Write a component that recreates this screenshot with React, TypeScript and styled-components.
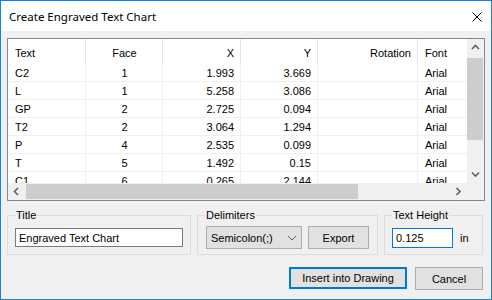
import styled, { createGlobalStyle } from "styled-components";

const GlobalStyle = createGlobalStyle`
  html, body {
    margin: 0;
    padding: 0;
    background: #ffffff;
  }
  body {
    font-family: "Liberation Sans", Arial, sans-serif;
    font-size: 11px;
    color: #000000;
  }
`;

type Align = "left" | "center" | "right";

interface Column {
  key: string;
  label: string;
  width: number;
  align: Align;
}

const columns: Column[] = [
  { key: "text", label: "Text", width: 78, align: "left" },
  { key: "face", label: "Face", width: 77, align: "center" },
  { key: "x", label: "X", width: 78, align: "right" },
  { key: "y", label: "Y", width: 77, align: "right" },
  { key: "rotation", label: "Rotation", width: 100, align: "right" },
  { key: "font", label: "Font", width: 80, align: "left" },
];

const rows: Record<string, string>[] = [
  { text: "C2", face: "1", x: "1.993", y: "3.669", rotation: "", font: "Arial" },
  { text: "L", face: "1", x: "5.258", y: "3.086", rotation: "", font: "Arial" },
  { text: "GP", face: "2", x: "2.725", y: "0.094", rotation: "", font: "Arial" },
  { text: "T2", face: "2", x: "3.064", y: "1.294", rotation: "", font: "Arial" },
  { text: "P", face: "4", x: "2.535", y: "0.099", rotation: "", font: "Arial" },
  { text: "T", face: "5", x: "1.492", y: "0.15", rotation: "", font: "Arial" },
  { text: "C1", face: "6", x: "0.265", y: "2.144", rotation: "", font: "Arial" },
];

const gridTemplate = columns.map((c) => `${c.width}px`).join(" ");

const justify = (a: Align) =>
  a === "left" ? "flex-start" : a === "right" ? "flex-end" : "center";

const Window = styled.div`
  box-sizing: border-box;
  width: 492px;
  height: 300px;
  border: 1px solid #1883d7;
  display: flex;
  flex-direction: column;
  background: #f0f0f0;
`;

const TitleBar = styled.div`
  height: 30px;
  flex: none;
  background: #ffffff;
  display: flex;
  align-items: center;
  justify-content: space-between;
  padding: 0 9px 0 8px;
`;

const TitleText = styled.span`
  font-family: "Noto Sans", "Open Sans", sans-serif;
  font-size: 11.5px;
  padding-top: 1px;
`;

const CloseIcon = styled.svg`
  width: 10px;
  height: 10px;
  margin-top: 1px;
`;

const Body = styled.div`
  flex: 1;
  display: flex;
  flex-direction: column;
  padding: 7px 7px 10px 6px;
`;

const ListBox = styled.div`
  height: 163px;
  box-sizing: border-box;
  margin-right: -1px;
  border: 1px solid #828790;
  background: #ffffff;
  display: grid;
  grid-template-columns: 1fr 17px;
  grid-template-rows: 144px 17px;
  overflow: hidden;
`;

const Viewport = styled.div`
  overflow: hidden;
`;

const HeaderRow = styled.div`
  display: grid;
  grid-template-columns: ${gridTemplate};
  height: 25px;
`;

const HeaderCell = styled.div<{ $align: Align }>`
  display: flex;
  align-items: center;
  justify-content: ${({ $align }) => justify($align)};
  padding: 2px 6px 0 7px;
  border-right: 1px solid #e5e5e5;
  white-space: nowrap;
`;

const DataRow = styled.div`
  display: grid;
  grid-template-columns: ${gridTemplate};
  height: 18px;
`;

const Cell = styled.div<{ $align: Align }>`
  box-sizing: border-box;
  display: flex;
  align-items: center;
  justify-content: ${({ $align }) => justify($align)};
  padding: 0 6px 0 7px;
  border-right: 1px solid #f0f0f0;
  border-bottom: 1px solid #f0f0f0;
  white-space: nowrap;
`;

const VScroll = styled.div`
  background: #f0f0f0;
  display: flex;
  flex-direction: column;
`;

const HScroll = styled.div`
  background: #f0f0f0;
  display: flex;
  align-items: stretch;
`;

const Corner = styled.div`
  background: #f0f0f0;
`;

const ArrowButton = styled.div`
  flex: none;
  width: 17px;
  height: 17px;
  display: flex;
  align-items: center;
  justify-content: center;
`;

const Track = styled.div<{ $vertical?: boolean }>`
  flex: 1;
  display: flex;
  flex-direction: ${({ $vertical }) => ($vertical ? "column" : "row")};
  padding: ${({ $vertical }) => ($vertical ? "2px 1px 0 0" : "1px 0 1px 1px")};
`;

const Thumb = styled.div<{ $size: number; $vertical?: boolean }>`
  background: #cdcdcd;
  ${({ $vertical, $size }) =>
    $vertical ? `height: ${$size}px; width: 100%;` : `width: ${$size}px; height: 100%;`}
`;

const GroupRow = styled.div`
  display: flex;
  gap: 6px;
  margin-top: 8px;
  padding-right: 1px;
`;

const Group = styled.fieldset<{ $width: number }>`
  box-sizing: border-box;
  width: ${({ $width }) => $width}px;
  height: 46px;
  margin: 0;
  padding: 0 7px 1px 7px;
  border: 1px solid #dcdcdc;
  display: flex;
  align-items: center;
  gap: 6px;
  min-width: 0;
`;

const Legend = styled.legend`
  padding: 0 1px;
  font-size: 11px;
  line-height: 13px;
`;

const TextBox = styled.input<{ $width: number; $focused?: boolean }>`
  box-sizing: border-box;
  width: ${({ $width }) => $width}px;
  height: ${({ $focused }) => ($focused ? 20 : 19)}px;
  margin: 0;
  padding: 0 3px;
  border: 1px solid ${({ $focused }) => ($focused ? "#0078d7" : "#7a7a7a")};
  background: #ffffff;
  font-family: "Liberation Sans", Arial, sans-serif;
  font-size: 11px;
  color: #000000;
  outline: none;
`;

const Dropdown = styled.div`
  box-sizing: border-box;
  width: 96px;
  height: 23px;
  margin-left: 1px;
  border: 1px solid #adadad;
  background: #e1e1e1;
  display: flex;
  align-items: center;
  justify-content: space-between;
  padding: 0 4px 0 4px;
`;

const Button = styled.div<{ $width: number; $default?: boolean }>`
  box-sizing: border-box;
  width: ${({ $width }) => $width}px;
  height: ${({ $default }) => ($default ? 22 : 23)}px;
  border: ${({ $default }) => ($default ? "2px solid #0078d7" : "1px solid #adadad")};
  background: #e1e1e1;
  display: flex;
  align-items: center;
  justify-content: center;
  white-space: nowrap;
`;

const Unit = styled.span`
  margin-left: 1px;
`;

const ButtonRow = styled.div`
  display: flex;
  justify-content: flex-end;
  gap: 8px;
  margin-top: 12px;
  padding-right: 1px;
`;

const Chevron = ({ dir }: { dir: "up" | "down" | "left" | "right" }) => {
  const points = {
    up: "1,5 4.5,1.5 8,5",
    down: "1,1.5 4.5,5 8,1.5",
    left: "5,1 1.5,4.5 5,8",
    right: "1.5,1 5,4.5 1.5,8",
  }[dir];
  const vertical = dir === "up" || dir === "down";
  return (
    <svg width={vertical ? 9 : 7} height={vertical ? 7 : 9}>
      <polyline points={points} fill="none" stroke="#606060" strokeWidth="1.6" />
    </svg>
  );
};

export default function App() {
  return (
    <>
      <GlobalStyle />
      <Window>
        <TitleBar>
          <TitleText>Create Engraved Text Chart</TitleText>
          <CloseIcon viewBox="0 0 10 10">
            <path d="M0.5 0.5 L9.5 9.5 M9.5 0.5 L0.5 9.5" stroke="#000" strokeWidth="1" fill="none" />
          </CloseIcon>
        </TitleBar>
        <Body>
          <ListBox>
            <Viewport>
              <HeaderRow>
                {columns.map((c) => (
                  <HeaderCell key={c.key} $align={c.align}>
                    {c.label}
                  </HeaderCell>
                ))}
              </HeaderRow>
              {rows.map((r, i) => (
                <DataRow key={i}>
                  {columns.map((c) => (
                    <Cell key={c.key} $align={c.align}>
                      {r[c.key]}
                    </Cell>
                  ))}
                </DataRow>
              ))}
            </Viewport>
            <VScroll>
              <ArrowButton>
                <Chevron dir="up" />
              </ArrowButton>
              <Track $vertical>
                <Thumb $vertical $size={82} />
              </Track>
              <ArrowButton>
                <Chevron dir="down" />
              </ArrowButton>
            </VScroll>
            <HScroll>
              <ArrowButton>
                <Chevron dir="left" />
              </ArrowButton>
              <Track>
                <Thumb $size={332} />
              </Track>
              <ArrowButton>
                <Chevron dir="right" />
              </ArrowButton>
            </HScroll>
            <Corner />
          </ListBox>

          <GroupRow>
            <Group $width={184}>
              <Legend>Title</Legend>
              <TextBox $width={169} defaultValue="Engraved Text Chart" />
            </Group>
            <Group $width={181}>
              <Legend>Delimiters</Legend>
              <Dropdown>
                <span>Semicolon(;)</span>
                <svg width="10" height="6">
                  <polyline points="1,1 5,5 9,1" fill="none" stroke="#606060" strokeWidth="1" />
                </svg>
              </Dropdown>
              <Button $width={61}>Export</Button>
            </Group>
            <Group $width={99}>
              <Legend>Text Height</Legend>
              <TextBox $width={61} $focused defaultValue="0.125" />
              <Unit>in</Unit>
            </Group>
          </GroupRow>

          <ButtonRow>
            <Button $width={118} $default>
              Insert into Drawing
            </Button>
            <Button $width={68}>Cancel</Button>
          </ButtonRow>
        </Body>
      </Window>
    </>
  );
}
